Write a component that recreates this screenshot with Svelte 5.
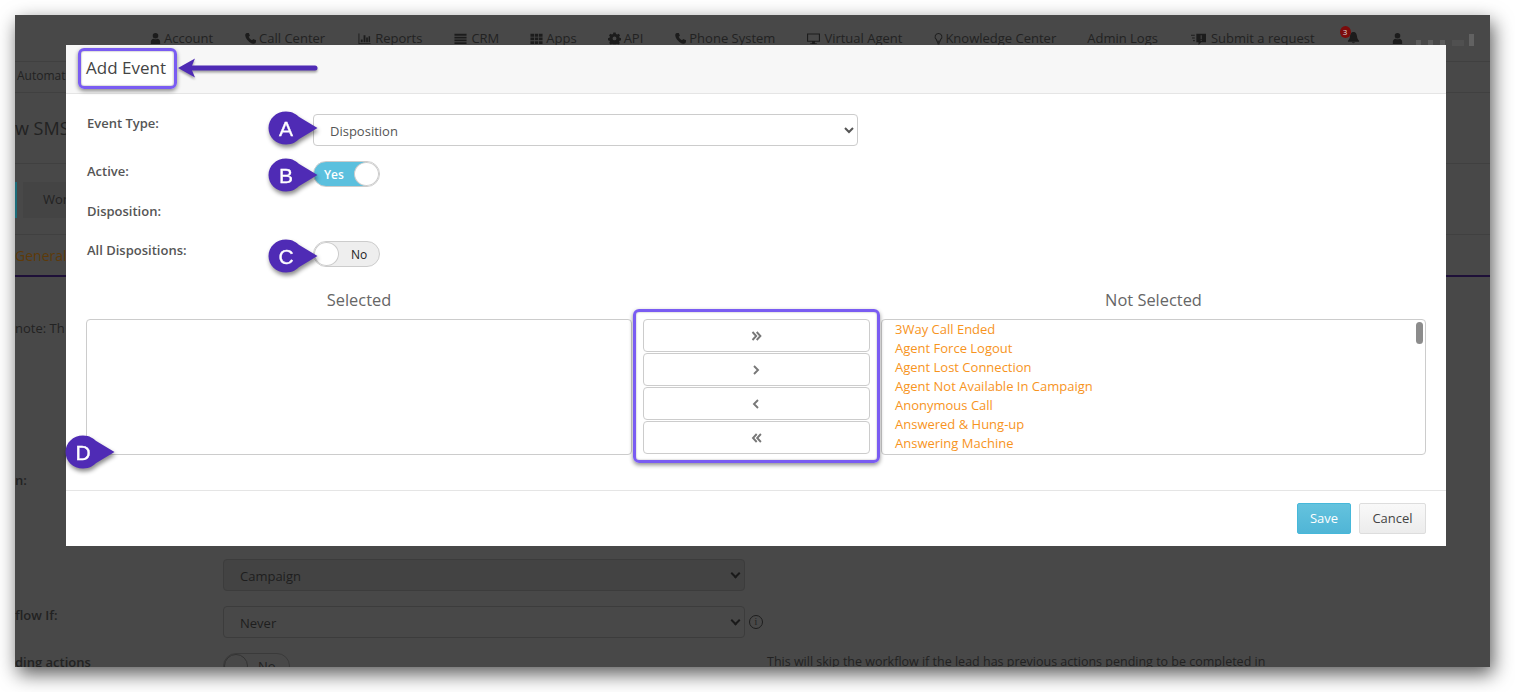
<script lang="ts">
	const navItems = [
		{ label: 'Account', icon: 'user' },
		{ label: 'Call Center', icon: 'phone' },
		{ label: 'Reports', icon: 'chart' },
		{ label: 'CRM', icon: 'list' },
		{ label: 'Apps', icon: 'grid' },
		{ label: 'API', icon: 'cog' },
		{ label: 'Phone System', icon: 'phone' },
		{ label: 'Virtual Agent', icon: 'desktop' },
		{ label: 'Knowledge Center', icon: 'bulb' },
		{ label: 'Admin Logs', icon: '' },
		{ label: 'Submit a request', icon: 'ticket' }
	];

	const dispositions = [
		'3Way Call Ended',
		'Agent Force Logout',
		'Agent Lost Connection',
		'Agent Not Available In Campaign',
		'Anonymous Call',
		'Answered & Hung-up',
		'Answering Machine'
	];

	const callouts = [
		{ letter: 'A', x: 268, y: 111 },
		{ letter: 'B', x: 268, y: 158 },
		{ letter: 'C', x: 268, y: 239 },
		{ letter: 'D', x: 65, y: 435 }
	];

	const moves = ['double-right', 'right', 'left', 'double-left'];
</script>

{#snippet icon(name: string)}
	<svg class="nav-icon {name}" viewBox="0 0 14 14" aria-hidden="true">
		{#if name === 'user'}
			<circle cx="7" cy="4" r="3" />
			<path d="M2 13V10.5C2 8.5 3.5 7.4 5 7.2C6 8 8 8 9 7.2C10.5 7.4 12 8.5 12 10.5V13Z" />
		{:else if name === 'phone'}
			<path d="M3.2 1.2L5.2 1L6.4 4L5 5.2C5.6 6.8 7 8.2 8.6 8.9L9.9 7.5L13 8.8L12.8 10.9C12.6 12.2 11.4 13 10 12.7C6 11.8 2.2 8 1.4 4C1.1 2.5 2 1.4 3.2 1.2Z" />
		{:else if name === 'chart'}
			<path d="M0.5 1.5H1.5V12H13.5V13H0.5ZM3 8H5V11H3ZM6 3.5H8V11H6ZM8.8 6H10.6V11H8.8ZM11.4 4.5H13V11H11.4Z" />
		{:else if name === 'list'}
			<path d="M0.5 2H13.5V4H0.5ZM0.5 5H13.5V7H0.5ZM0.5 8H13.5V10H0.5ZM0.5 11H13.5V13H0.5Z" />
		{:else if name === 'grid'}
			<path d="M0.5 2H4.3V5H0.5ZM5.1 2H8.9V5H5.1ZM9.7 2H13.5V5H9.7ZM0.5 6H4.3V9H0.5ZM5.1 6H8.9V9H5.1ZM9.7 6H13.5V9H9.7ZM0.5 10H4.3V13H0.5ZM5.1 10H8.9V13H5.1ZM9.7 10H13.5V13H9.7Z" />
		{:else if name === 'cog'}
			<path fill-rule="evenodd" d="M5.8 0.5H8.2L8.6 2.2L9.9 2.8L11.4 1.9L13 3.6L12 5.1L12.5 6.3L14 6.7V8.9L12.4 9.3L11.9 10.5L12.8 11.9L11.2 13.5L9.7 12.6L8.5 13.1H5.6L4.4 12.6L2.9 13.5L1.2 11.9L2.1 10.5L1.6 9.3L0 8.9V6.7L1.6 6.3L2.1 5.1L1.1 3.6L2.7 1.9L4.2 2.8L5.4 2.2ZM7 4.8A2.1 2.1 0 1 0 7 9A2.1 2.1 0 1 0 7 4.8Z" />
		{:else if name === 'desktop'}
			<path fill-rule="evenodd" d="M0 1.5H14V10.5H8.5V12H10.5V13H3.5V12H5.5V10.5H0ZM1.2 2.7V9.3H12.8V2.7Z" />
		{:else if name === 'bulb'}
			<path fill-rule="evenodd" d="M7 1A4.2 4.2 0 0 1 9.6 8.5L9 10.5H5L4.4 8.5A4.2 4.2 0 0 1 7 1ZM7 2.1A3.1 3.1 0 0 0 5.2 7.8L5.8 9.5H8.2L8.8 7.8A3.1 3.1 0 0 0 7 2.1ZM5.4 11H8.6V12H5.4ZM6 12.5H8V13.5H6Z" />
		{:else if name === 'ticket'}
			<path fill-rule="evenodd" d="M5 2.5H14V10.5H9.5L7 13V10.5H5ZM9 4V7.5H10V4ZM9 8.2V9.3H10V8.2ZM0 3.5H3.5V4.5H0ZM1 6H3.5V7H1ZM2 8.5H3.5V9.5H2Z" />
		{/if}
	</svg>
{/snippet}

<div class="screen">
	<div class="window">
		<div class="page">
			<nav class="topnav">
				{#each navItems as item}
					<span class="nav-item">
						{#if item.icon}{@render icon(item.icon)}{/if}
						{item.label}
					</span>
				{/each}
				<span class="bell">
					<svg viewBox="0 0 14 14" aria-hidden="true">
						<path d="M7 1C9.8 1 10.6 3.5 10.8 6C11 8.5 12 9.5 13 10.5V11.5H1V10.5C2 9.5 3 8.5 3.2 6C3.4 3.5 4.2 1 7 1ZM5.5 12.2H8.5C8.3 13.4 5.7 13.4 5.5 12.2Z" />
					</svg>
					<span class="bell-count">3</span>
				</span>
				<span class="nav-user">
					{@render icon('user')}
					<span class="blur-name">
						<i></i><i></i><i></i><i class="faint"></i><i class="tall"></i>
					</span>
				</span>
			</nav>
			<div class="crumb">Automat</div>
			<h1 class="page-title">w SMS</h1>
			<div class="tabs"><span class="tab"><span>Wor</span></span></div>
			<div class="subtab">General</div>
			<p class="note">note: Th</p>
			<div class="form-label first">n:</div>
			<div class="form-row campaign"><span class="dim-select darker">Campaign <b></b></span></div>
			<div class="form-row never">
				<span class="form-label">flow If:</span>
				<span class="dim-select">Never <b></b></span>
				<span class="info">i</span>
			</div>
			<div class="form-row pending">
				<span class="form-label">ding actions</span>
				<span class="dim-toggle"><i></i>No</span>
				<span class="skip-text">This will skip the workflow if the lead has previous actions pending to be completed in</span>
			</div>
		</div>

		<section class="modal">
			<header class="modal-header"><span class="modal-title">Add Event</span></header>
			<div class="modal-body">
				<div class="row row-type">
					<span class="row-label">Event Type:</span>
					<select class="type-select">
						<option>Disposition</option>
					</select>
				</div>
				<div class="row row-active">
					<span class="row-label">Active:</span>
					<span class="switch on">Yes<i></i></span>
				</div>
				<div class="row row-disposition">
					<span class="row-label">Disposition:</span>
				</div>
				<div class="row">
					<span class="row-label">All Dispositions:</span>
					<span class="switch off"><i></i>No</span>
				</div>

				<div class="transfer">
					<h4>Selected</h4>
					<span></span>
					<h4>Not Selected</h4>
					<div class="listbox"></div>
					<div class="moves">
						{#each moves as dir}
							<button type="button" aria-label={dir}>
								<svg viewBox="0 0 12 10" aria-hidden="true">
									{#if dir === 'double-right'}
										<path d="M1.5 1L5.2 5L1.5 9M5.7 1L9.4 5L5.7 9" />
									{:else if dir === 'right'}
										<path d="M3 1L7 5L3 9" />
									{:else if dir === 'left'}
										<path d="M7 1L3 5L7 9" />
									{:else}
										<path d="M5.7 1L2 5L5.7 9M9.9 1L6.2 5L9.9 9" />
									{/if}
								</svg>
							</button>
						{/each}
					</div>
					<div class="listbox options">
						{#each dispositions as name}
							<div>{name}</div>
						{/each}
						<span class="thumb"></span>
					</div>
				</div>
			</div>
			<footer class="modal-footer">
				<button type="button" class="btn save">Save</button>
				<button type="button" class="btn cancel">Cancel</button>
			</footer>
		</section>
	</div>

	<!-- annotation layer, drawn on top of the screenshot -->
	<div class="mark title-mark"></div>
	<div class="mark moves-mark"></div>
	<svg class="arrow" viewBox="0 0 142 22" aria-hidden="true">
		<path d="M14 11H138" stroke="#4f2bb5" stroke-width="5" stroke-linecap="round" fill="none" />
		<path d="M1 11L18 1.5L14 11L18 20.5Z" fill="#4f2bb5" />
	</svg>
	{#each callouts as c}
		<svg class="callout" style="left: {c.x}px; top: {c.y}px" viewBox="0 0 50 34">
			<path d="M18 0.5C25 0.5 28 3.5 32 6.5L49.5 17L32 27.5C28 30.5 25 33.5 18 33.5C8 33.5 0.5 26 0.5 17C0.5 8 8 0.5 18 0.5Z" />
			<text x="18" y="24.5">{c.letter}</text>
		</svg>
	{/each}
</div>

<style>
	:global(body) {
		margin: 0;
		background: #fff;
	}

	.screen {
		position: relative;
		width: 1515px;
		height: 692px;
		overflow: hidden;
		padding: 15px 25px 25px 15px;
		box-sizing: border-box;
		font-family: 'Open Sans', 'Noto Sans', sans-serif;
	}

	.window {
		position: relative;
		width: 1475px;
		height: 652px;
		background: #484848;
		box-shadow: 3px 7px 18px rgba(0, 0, 0, 0.65);
	}

	.page {
		height: 100%;
		overflow: hidden;
		color: #222;
		font-size: 13px;
	}

	.topnav {
		display: flex;
		align-items: center;
		height: 47px;
		padding: 0 0 0 134px;
		box-sizing: border-box;
		gap: 31px;
		border-bottom: 1px solid #404040;
		white-space: nowrap;
	}

	.nav-item {
		display: flex;
		align-items: center;
		gap: 2px;
	}

	.nav-icon {
		width: 13px;
		height: 13px;
		fill: #1c1c1c;
		flex: none;
	}

	.nav-icon.chart {
		margin: 0 2px;
	}

	.nav-icon.list {
		margin: 0 2px 0 1px;
	}

	.nav-icon.grid,
	.nav-icon.cog {
		margin-right: 1px;
	}

	.nav-icon.desktop {
		margin: 0 2px 0 1px;
	}

	.nav-icon.bulb {
		margin: 0 -1.5px;
	}

	.nav-icon.ticket {
		width: 17px;
		height: 15px;
		margin: 0 2px 0 1px;
	}

	.bell {
		position: relative;
		width: 20px;
		height: 16px;
		margin: -2px 0 0 -6px;
	}

	.bell svg {
		position: absolute;
		right: 0;
		top: 2px;
		width: 13px;
		height: 13px;
		fill: #1c1c1c;
	}

	.bell-count {
		position: absolute;
		left: 0;
		top: -3px;
		width: 11px;
		height: 12px;
		border-radius: 50%;
		background: #7c0b0b;
		color: #ddd;
		font-size: 8px;
		line-height: 12px;
		text-align: center;
	}

	.nav-user {
		display: flex;
		align-items: center;
		gap: 12px;
	}

	.blur-name {
		display: flex;
		align-items: flex-end;
		gap: 7px;
		padding-top: 4px;
	}

	.blur-name i {
		width: 5px;
		height: 6px;
		background: #5c5c5c;
	}

	.blur-name i.faint {
		width: 12px;
		background: #505050;
	}

	.blur-name i.tall {
		margin-left: -2px;
		height: 12px;
		background: #626262;
	}

	.crumb {
		height: 31px;
		line-height: 28px;
		padding-left: 2px;
		font-size: 12px;
		border-bottom: 1px solid #404040;
		box-sizing: border-box;
	}

	.page-title {
		height: 71px;
		margin: 0;
		line-height: 71px;
		font-size: 18px;
		font-weight: 400;
		border-bottom: 1px solid #404040;
		box-sizing: border-box;
	}

	.tabs {
		height: 71px;
		padding-top: 18px;
		box-sizing: border-box;
		border-bottom: 1px solid #404040;
	}

	.tab {
		display: block;
		width: 100px;
		height: 36px;
		border-left: 2px solid #1d6d7a;
	}

	.tab span {
		display: block;
		height: 36px;
		line-height: 34px;
		margin-left: 6px;
		padding-left: 20px;
		background: #444;
	}

	.subtab {
		height: 42px;
		line-height: 42px;
		font-size: 14px;
		color: #5e3a08;
		border-bottom: 2px solid #1e1038;
		box-sizing: border-box;
	}

	.note {
		margin: 42px 0 0;
		line-height: 18px;
	}

	.form-label {
		font-weight: 600;
		font-size: 13px;
	}

	.form-label.first {
		margin-top: 134px;
		line-height: 18px;
	}

	.form-row {
		display: flex;
		align-items: center;
	}

	.campaign {
		margin: 70px 0 0 208px;
	}

	.never {
		margin-top: 15px;
		position: relative;
	}

	.never .form-label {
		width: 208px;
		align-self: flex-start;
		line-height: 18px;
	}

	.dim-select {
		display: flex;
		align-items: center;
		justify-content: space-between;
		width: 522px;
		height: 32px;
		padding: 1px 5px 0 16px;
		box-sizing: border-box;
		border: 1px solid #3c3c3c;
		border-radius: 4px;
		color: #1e1e1e;
	}

	.dim-select.darker {
		background: #434343;
	}

	.dim-select b {
		width: 5px;
		height: 5px;
		border: solid #1a1a1a;
		border-width: 0 2px 2px 0;
		transform: translateY(-2px) rotate(45deg);
	}

	.info {
		width: 12px;
		height: 12px;
		margin-left: 4px;
		border: 1px solid #1e1e1e;
		border-radius: 50%;
		font: 10px/12px 'Liberation Serif', serif;
		text-align: center;
	}

	.pending {
		margin-top: 15px;
		align-items: flex-start;
	}

	.pending .form-label {
		width: 208px;
		line-height: 18px;
	}

	.dim-toggle {
		display: flex;
		align-items: center;
		gap: 10px;
		width: 67px;
		height: 26px;
		border: 1px solid #3a3a3a;
		border-radius: 13px;
		box-sizing: border-box;
	}

	.dim-toggle i {
		width: 24px;
		height: 24px;
		border: 1px solid #333;
		border-radius: 50%;
		box-sizing: border-box;
	}

	.skip-text {
		margin: 0 0 0 477px;
		line-height: 18px;
		font-size: 12.5px;
		white-space: nowrap;
	}

	.modal {
		position: absolute;
		left: 51px;
		top: 30px;
		width: 1380px;
		background: #fff;
		color: #555;
		font-size: 13px;
	}

	.modal-header {
		height: 49px;
		padding: 7px 0 0 16px;
		box-sizing: border-box;
		background: #f7f7f7;
		border-bottom: 1px solid #e5e5e5;
		font-size: 17px;
		line-height: 32px;
		color: #444;
	}

	.modal-title {
		display: inline-block;
		height: 33px;
		padding: 0 6px 0 4px;
		background: #fff;
	}

	.modal-body {
		padding: 20px 20px 35px;
	}

	.row {
		display: grid;
		grid-template-columns: 227px 1fr;
		align-items: start;
	}

	.row-type {
		margin-bottom: 15px;
	}

	.row-active {
		margin-bottom: 15px;
	}

	.row-active .row-label {
		padding-top: 1px;
	}

	.row-disposition {
		margin-bottom: 21px;
	}

	.row-label {
		padding-left: 1px;
		font-size: 13px;
		font-weight: 600;
		line-height: 18px;
		color: #555;
	}

	.type-select {
		width: 545px;
		height: 32px;
		padding: 2px 0 0 12px;
		border: 1px solid #ccc;
		border-radius: 4px;
		background: #fff;
		color: #555;
		font: 13px 'Open Sans', sans-serif;
	}

	.switch {
		display: flex;
		align-items: center;
		width: 67px;
		height: 26px;
		box-sizing: border-box;
		border: 1px solid #ccc;
		border-radius: 13px;
		font-size: 12px;
		overflow: hidden;
	}

	.switch i {
		width: 25px;
		height: 24px;
		flex: none;
		box-sizing: border-box;
		border: 1px solid #ccc;
		border-radius: 50%;
		background: #fff;
	}

	.switch.on {
		justify-content: space-between;
		padding-left: 10px;
		background: linear-gradient(90deg, #5bc0de 78%, #fff 78%);
		color: #fff;
		font-weight: 600;
	}

	.switch.off {
		gap: 12px;
		background: linear-gradient(90deg, #fff 20%, #eee 20%);
		color: #222;
	}

	.transfer {
		display: grid;
		grid-template-columns: 546px 1fr 545px;
		margin-top: 22px;
	}

	.transfer h4 {
		margin: 0 0 8px;
		font-size: 16.4px;
		font-weight: 400;
		line-height: 22px;
		text-align: center;
		color: #666;
	}

	.listbox {
		position: relative;
		height: 136px;
		box-sizing: border-box;
		border: 1px solid #ccc;
		border-radius: 4px;
	}

	.options {
		padding: 0 13px;
		color: #f7941d;
		font-size: 13px;
		line-height: 19px;
		overflow: hidden;
	}

	.thumb {
		position: absolute;
		top: 2px;
		right: 2px;
		width: 7px;
		height: 22px;
		border-radius: 4px;
		background: #8c8c8c;
	}

	.moves {
		display: flex;
		flex-direction: column;
		gap: 1px;
		padding: 0 11px;
	}

	.moves button {
		display: flex;
		align-items: center;
		justify-content: center;
		height: 33px;
		padding: 0;
		border: 1px solid #ccc;
		border-radius: 4px;
		background: #fff;
	}

	.moves svg {
		width: 12px;
		height: 10px;
		fill: none;
		stroke: #777;
		stroke-width: 1.9;
	}

	.modal-footer {
		display: flex;
		justify-content: flex-end;
		gap: 8px;
		padding: 12px 20px;
		border-top: 1px solid #e5e5e5;
	}

	.btn {
		height: 31px;
		padding: 0 0 2px;
		border-radius: 2px;
		font: 13px 'Open Sans', sans-serif;
	}

	.save {
		width: 54px;
		border: 1px solid #46b8da;
		background: linear-gradient(#64c3de, #50b5d6);
		color: #fff;
	}

	.cancel {
		width: 67px;
		border: 1px solid #ddd;
		background: linear-gradient(#f9f9f9, #ececec);
		color: #444;
	}

	.mark {
		position: absolute;
		box-sizing: border-box;
		border: 3px solid #7a5cf2;
		border-radius: 6px;
		box-shadow:
			0 2px 4px rgba(0, 0, 0, 0.45),
			inset 0 0 2px rgba(0, 0, 0, 0.35);
	}

	.title-mark {
		left: 78px;
		top: 48px;
		width: 99px;
		height: 41px;
	}

	.moves-mark {
		left: 633px;
		top: 309px;
		width: 247px;
		height: 154px;
	}

	.arrow {
		position: absolute;
		left: 177px;
		top: 57px;
		width: 142px;
		height: 22px;
		filter: drop-shadow(0 2px 1px rgba(0, 0, 0, 0.35));
	}

	.callout {
		position: absolute;
		width: 50px;
		height: 34px;
		overflow: visible;
		filter: drop-shadow(1px 3px 2px rgba(0, 0, 0, 0.45));
	}

	.callout path {
		fill: #4f2bb5;
	}

	.callout text {
		fill: #fff;
		stroke: #fff;
		stroke-width: 0.3;
		font: 21px 'Liberation Sans', sans-serif;
		text-anchor: middle;
	}
</style>
